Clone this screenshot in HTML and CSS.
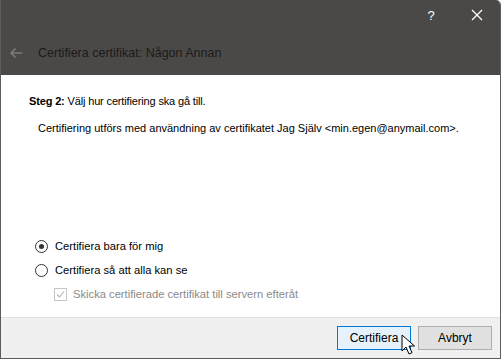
FILE: index.html
```html
<!DOCTYPE html>
<html lang="sv">
<head>
    <meta charset="UTF-8">
    <title>Certifiera certifikat</title>
    <link rel="stylesheet" href="styles.css">
</head>
<body>
    <div class="window">
        <div class="header">
            <div class="titlebar">
                <span class="tb-btn help">?</span>
                <span class="tb-btn close">
                    <svg width="12" height="12" viewBox="0 0 12 12"><path d="M1 1L11 11M11 1L1 11" stroke="#fff" stroke-width="1.3"/></svg>
                </span>
            </div>
            <div class="title-row">
                <svg class="back" width="14" height="12" viewBox="0 0 14 12"><path d="M13 6H2M6.5 1.5L2 6l4.5 4.5" fill="none" stroke="#7c7b79" stroke-width="1.6"/></svg>
                <span class="title">Certifiera certifikat: Någon Annan</span>
            </div>
        </div>
        <div class="content">
            <p class="step"><b>Steg 2:</b> Välj hur certifiering ska gå till.</p>
            <p class="info">Certifiering utförs med användning av certifikatet Jag Själv &lt;min.egen@anymail.com&gt;.</p>
            <div class="options">
                <div class="option">
                    <span class="radio checked"></span>
                    <span>Certifiera bara för mig</span>
                </div>
                <div class="option">
                    <span class="radio"></span>
                    <span>Certifiera så att alla kan se</span>
                </div>
                <div class="option sub disabled">
                    <span class="check">
                        <svg width="11" height="11" viewBox="0 0 11 11"><path d="M2 5.5l2.5 2.5L9 2.5" fill="none" stroke="#b5b5b5" stroke-width="1.1"/></svg>
                    </span>
                    <span>Skicka certifierade certifikat till servern efteråt</span>
                </div>
            </div>
        </div>
        <div class="footer">
            <button class="btn primary">Certifiera</button>
            <button class="btn">Avbryt</button>
        </div>
        <svg class="cursor" width="14" height="22" viewBox="0 0 14 22"><path d="M1 1v16l4-4 3 7 3-1.3-3-6.7h5.5z" fill="#fff" stroke="#000" stroke-width="1"/></svg>
    </div>
</body>
</html>
```

FILE: styles.css
```css
body {
    margin: 0;
    background: #fff;
    font-family: "Liberation Sans", Arial, sans-serif;
    font-size: 11px;
    color: #000;
}
.window {
    position: relative;
    width: 499px;
    height: 358px;
    border: 1px solid #5c5c5c;
    border-top: none;
    border-top-right-radius: 5px;
    overflow: hidden;
    display: flex;
    flex-direction: column;
}
.header {
    background: #4b4947;
    height: 75px;
    flex-shrink: 0;
}
.titlebar {
    height: 30px;
    display: flex;
    justify-content: flex-end;
    align-items: center;
}
.tb-btn {
    width: 46px;
    display: flex;
    justify-content: center;
    color: #fff;
    font-size: 14px;
}
.help {
    font-size: 13px;
    padding-left: 6px;
}
.title-row {
    display: flex;
    align-items: center;
    height: 45px;
    padding-left: 8px;
}
.back {
    margin-right: 15px;
}
.title {
    color: #1a1a1a;
    font-size: 12.5px;
}
.content {
    flex: 1;
    min-height: 0;
    padding: 20px 28px 0;
    white-space: nowrap;
}
.content p {
    margin: 0;
}
.step {
    margin-bottom: 15px !important;
    letter-spacing: -0.15px;
}
.info {
    padding-left: 9px;
}
.options {
    margin-top: 100px;
    padding-left: 6px;
}
.option {
    display: flex;
    align-items: center;
    height: 24px;
    font-size: 11.2px;
}
.radio {
    width: 11px;
    height: 11px;
    border: 1px solid #333;
    border-radius: 50%;
    margin-right: 7px;
    position: relative;
}
.radio.checked::after {
    content: "";
    position: absolute;
    left: 3px;
    top: 3px;
    width: 5px;
    height: 5px;
    border-radius: 50%;
    background: #333;
}
.sub {
    padding-left: 19px;
}
.disabled {
    color: #8a8a8a;
}
.check {
    width: 11px;
    height: 11px;
    border: 1px solid #c6c6c6;
    margin-right: 6px;
    display: flex;
}
.footer {
    height: 40px;
    flex-shrink: 0;
    background: #f0f0f0;
    border-top: 1px solid #dfdfdf;
    display: flex;
    justify-content: flex-end;
    align-items: center;
    gap: 7px;
    padding-right: 8px;
}
.btn {
    width: 74px;
    height: 24px;
    font-family: "Liberation Sans", Arial, sans-serif;
    font-size: 12px;
    background: #e1e1e1;
    border: 1px solid #adadad;
    color: #000;
    padding: 0;
}
.btn.primary {
    background: #e5f1fb;
    border-color: #0078d7;
}
.cursor {
    position: absolute;
    left: 400px;
    top: 334px;
}
```
